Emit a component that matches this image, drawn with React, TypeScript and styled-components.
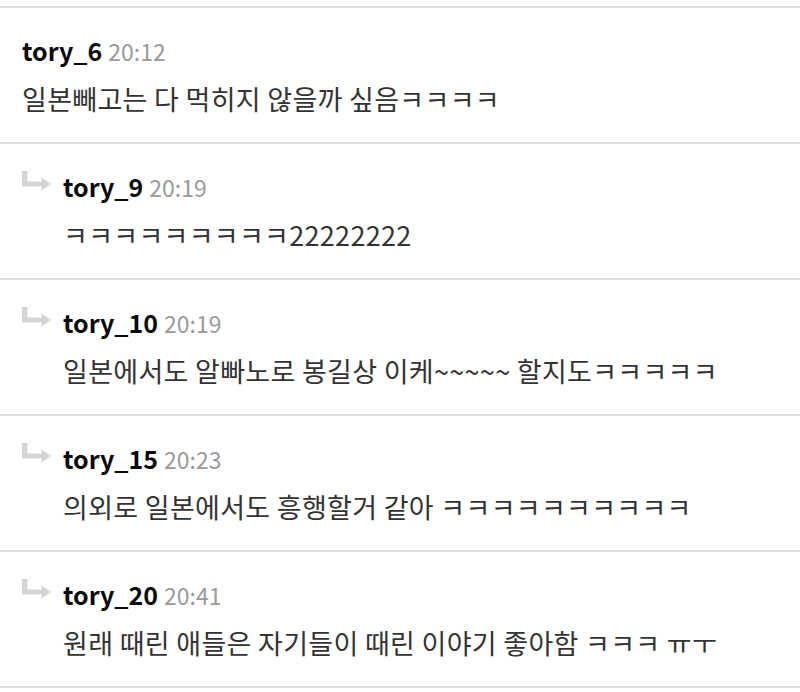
import styled, { createGlobalStyle } from "styled-components";

const GlobalStyle = createGlobalStyle`
  body {
    margin: 0;
    background: #fff;
    font-family: "Noto Sans CJK KR", "Noto Sans", sans-serif;
  }
`;

const List = styled.div`
  padding-top: 6px;
`;

const Item = styled.div<{ $last?: boolean }>`
  display: flex;
  align-items: flex-start;
  gap: 11px;
  height: 134px;
  padding-left: 22px;
  border-top: 2px solid #dddddd;
  border-bottom: ${(p) => (p.$last ? "2px solid #dddddd" : "none")};
`;

const ReplyIcon = styled.svg`
  flex: none;
  margin-top: 24px;
  width: 30px;
  height: 24px;
`;

const Body = styled.div`
  display: flex;
  flex-direction: column;
  padding-top: 25px;
`;

const Meta = styled.div`
  display: flex;
  align-items: baseline;
  gap: 6px;
  line-height: 34px;
`;

const Name = styled.span`
  font-size: 25px;
  font-weight: 700;
  color: #0a0a0a;
`;

const Time = styled.span`
  font-size: 23px;
  color: #9a9a9a;
`;

const Text = styled.div`
  margin-top: 14px;
  font-size: 27px;
  letter-spacing: 0.3px;
  line-height: 34px;
  color: #333;
`;

const Arrow = () => (
  <ReplyIcon viewBox="0 0 30 24">
    <rect x="0" y="3" width="5.5" height="15" fill="#d6d6d6" />
    <rect x="0" y="13.5" width="21" height="5" fill="#d6d6d6" />
    <polygon points="19.5,9.5 29,16 19.5,22.5" fill="#d6d6d6" />
  </ReplyIcon>
);

const comments = [
  { name: "tory_6", time: "20:12", text: "일본빼고는 다 먹히지 않을까 싶음ㅋㅋㅋㅋ", reply: false },
  { name: "tory_9", time: "20:19", text: "ㅋㅋㅋㅋㅋㅋㅋㅋㅋ22222222", reply: true },
  { name: "tory_10", time: "20:19", text: "일본에서도 알빠노로 봉길상 이케~~~~~ 할지도ㅋㅋㅋㅋㅋ", reply: true },
  { name: "tory_15", time: "20:23", text: "의외로 일본에서도 흥행할거 같아 ㅋㅋㅋㅋㅋㅋㅋㅋㅋㅋ", reply: true },
  { name: "tory_20", time: "20:41", text: "원래 때린 애들은 자기들이 때린 이야기 좋아함 ㅋㅋㅋ ㅠㅜ", reply: true },
];

export default function App() {
  return (
    <>
      <GlobalStyle />
      <List>
        {comments.map((c, i) => (
          <Item key={c.name} $last={i === comments.length - 1}>
            {c.reply && <Arrow />}
            <Body>
              <Meta>
                <Name>{c.name}</Name>
                <Time>{c.time}</Time>
              </Meta>
              <Text>{c.text}</Text>
            </Body>
          </Item>
        ))}
      </List>
    </>
  );
}
